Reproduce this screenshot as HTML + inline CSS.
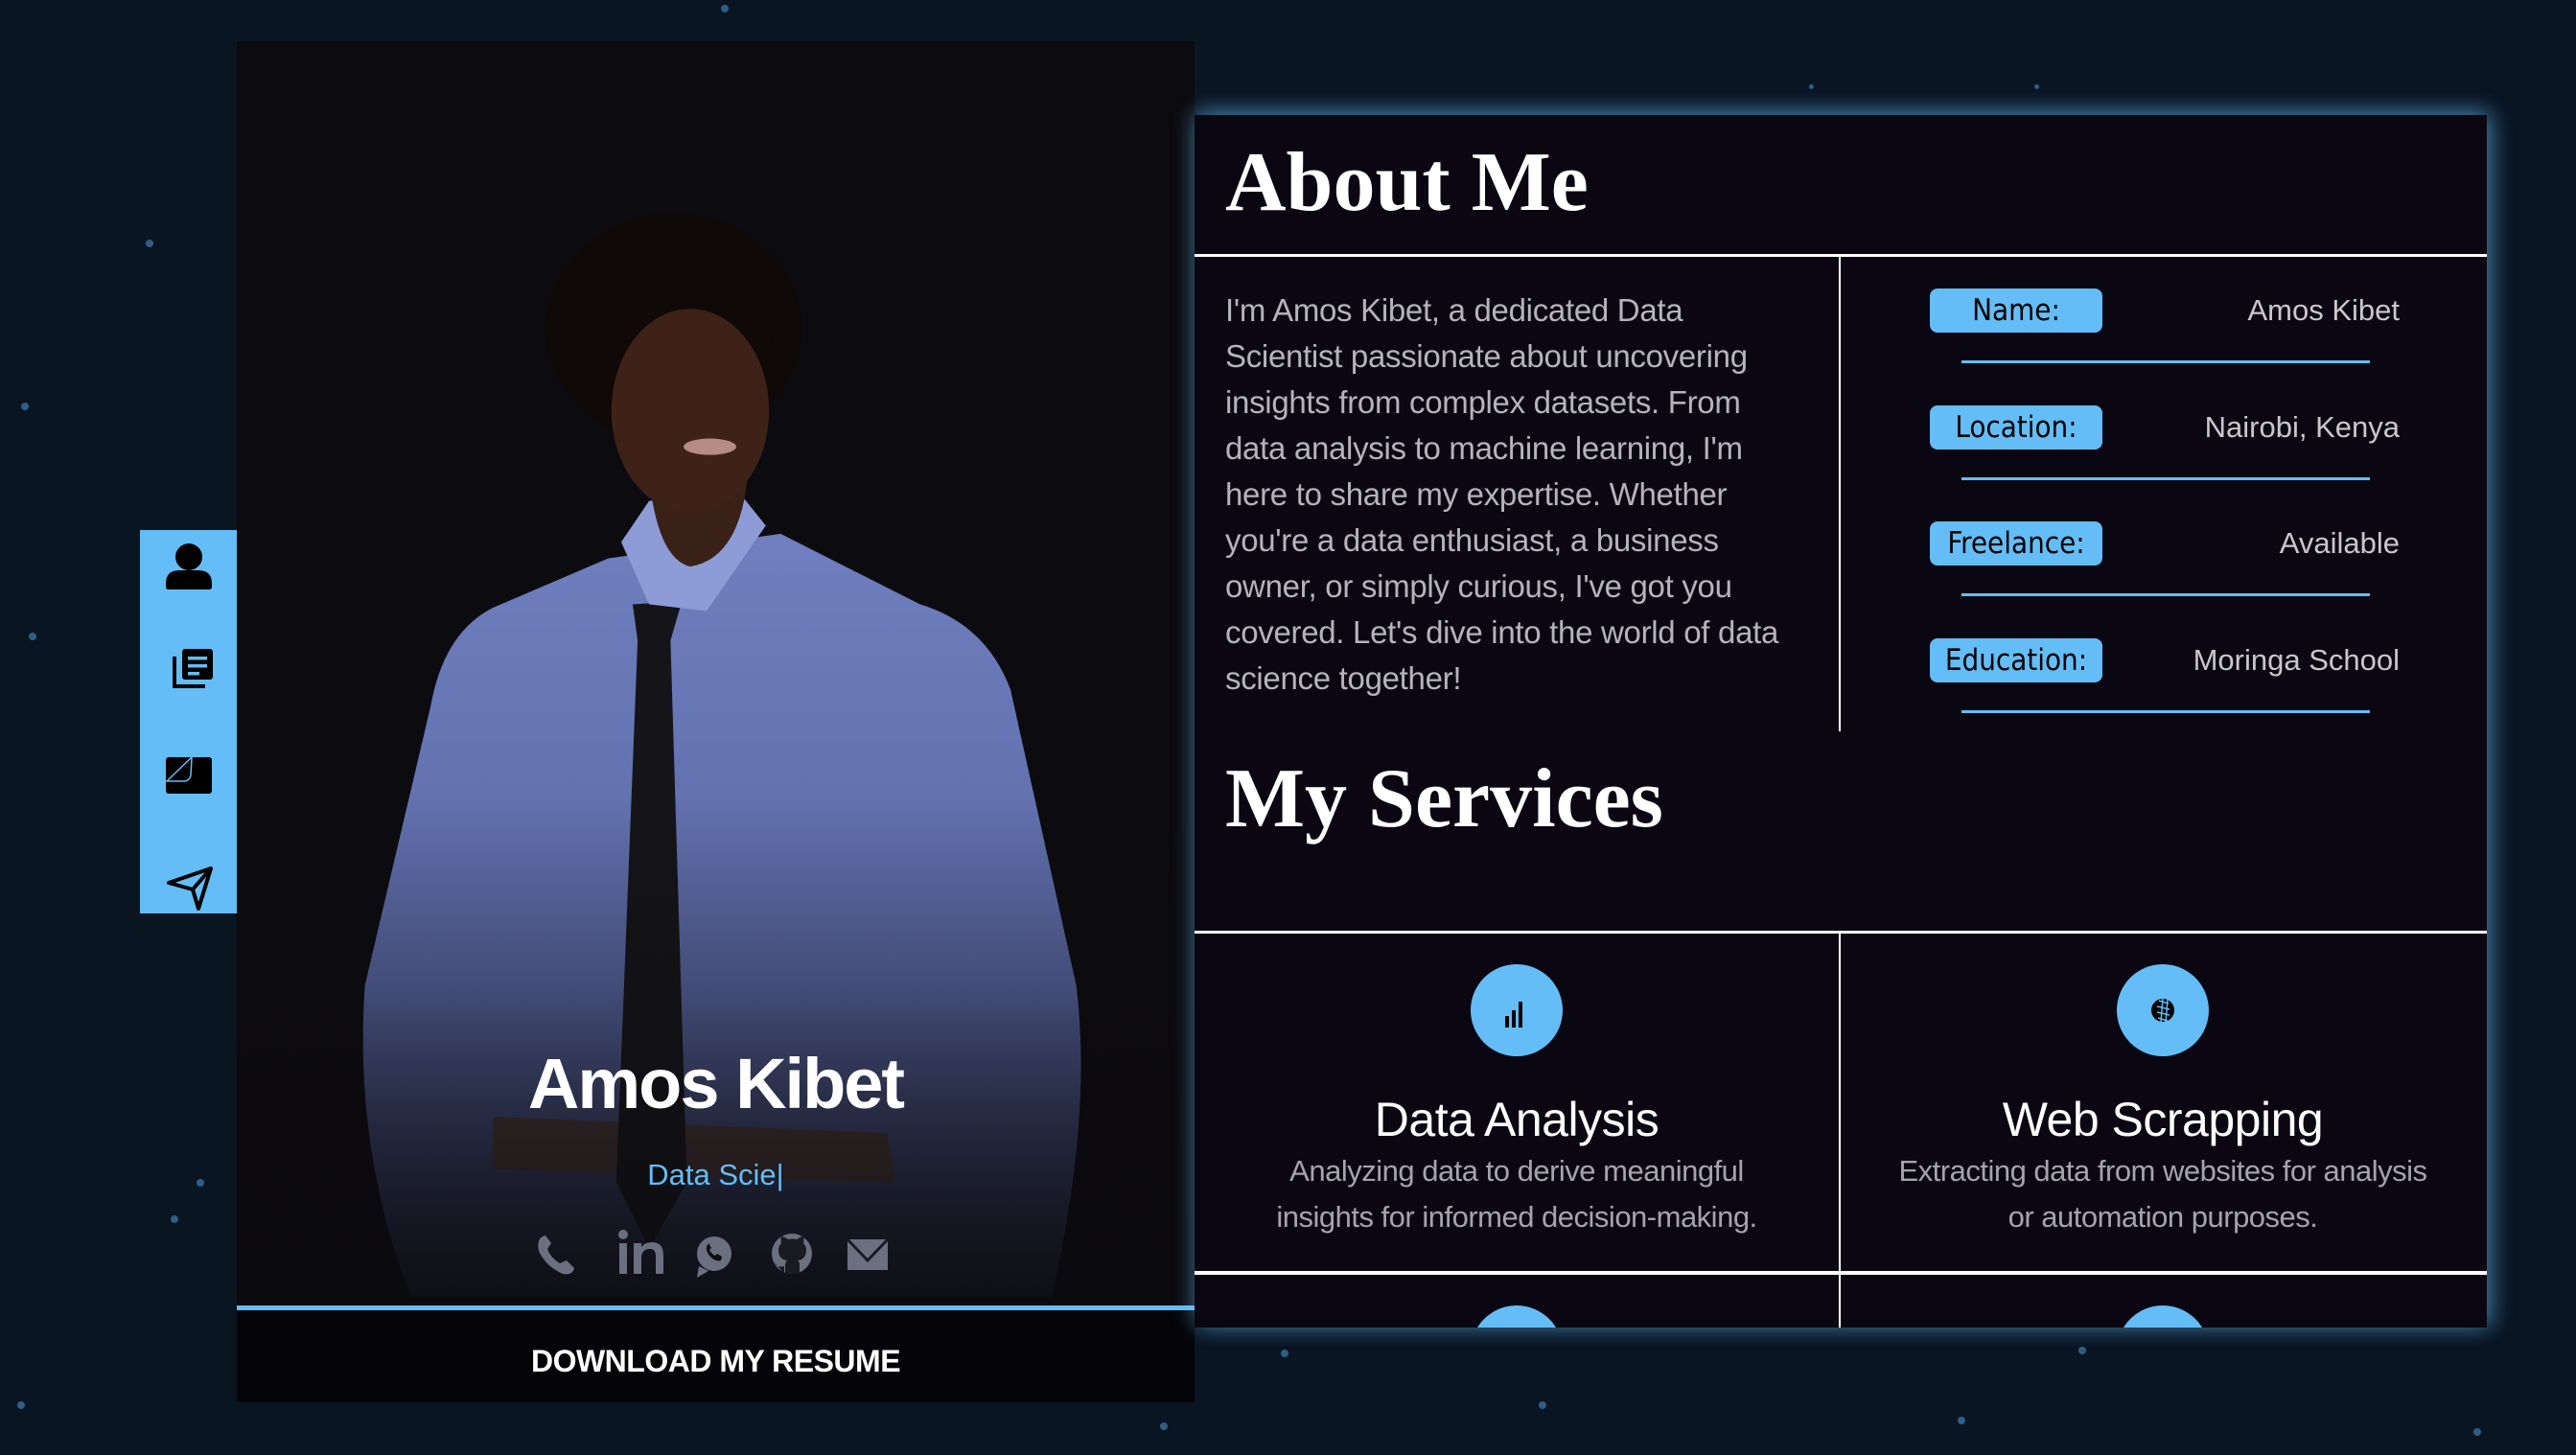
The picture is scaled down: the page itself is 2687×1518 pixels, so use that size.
<!DOCTYPE html>
<html><head><meta charset="utf-8"><style>
*{margin:0;padding:0;box-sizing:border-box}
html,body{width:2687px;height:1518px;overflow:hidden;background:#0a1522;font-family:"Liberation Sans",sans-serif}
.dot{position:absolute;width:8px;height:8px;border-radius:50%;background:#2e5e86}
#card{position:absolute;left:247px;top:43px;width:999px;height:1420px;background:#0b0a0d;overflow:hidden}
#photo{position:absolute;left:0;top:0;width:999px;height:1319px}
#name{position:absolute;left:0;width:999px;top:1045px;text-align:center;color:#fff;font-weight:bold;font-size:74px;letter-spacing:-2px}
#role{position:absolute;left:0;width:999px;top:1165px;text-align:center;color:#64bdf6;font-size:31px}
#icons{position:absolute;top:1240px;left:0;width:999px}
#bar{position:absolute;left:0;top:1319px;width:999px;height:5px;background:#64bdf6}
#dl{position:absolute;left:0;top:1324px;width:999px;height:96px;background:#050508;color:#fff;font-weight:bold;font-size:32px;text-align:center;line-height:106px;letter-spacing:-.5px}
#side{position:absolute;left:146px;top:553px;width:101px;height:400px;background:#64bdf6}
#panel{position:absolute;left:1246px;top:120px;width:1348px;height:1265px;background:#0b0712;box-shadow:0 -4px 22px rgba(100,189,246,.45),6px 0 22px rgba(100,189,246,.35);overflow:hidden}
.h1{position:absolute;left:32px;font-family:"Liberation Serif",serif;font-weight:bold;font-size:88px;color:#fff}
.line{position:absolute;background:#fff}
#para{position:absolute;left:32px;top:180px;width:605px;color:#b4b4bd;font-size:33px;line-height:48px;letter-spacing:-.3px}
.row{position:absolute;left:767px;width:490px}
.badge{position:absolute;left:0;top:0;width:180px;height:46px;border-radius:8px;background:#64bdf6;color:#000;font-size:31px;text-align:center;line-height:46px;font-family:"DejaVu Sans Condensed","DejaVu Sans",sans-serif}
.val{position:absolute;right:0;top:0;line-height:46px;color:#c8c8cc;font-size:31px}
.ul{position:absolute;left:33px;top:75px;width:426px;height:3px;background:#64bdf6}
.svc{position:absolute;width:672px;text-align:center}
.circ{width:96px;height:96px;border-radius:50%;background:#64bdf6;margin:0 auto;position:relative}
.svc h3{color:#fff;font-weight:normal;font-size:50px;margin-top:36px;line-height:60px;letter-spacing:-.5px}
.svc p{color:#a4a4ae;font-size:31px;line-height:48px;margin-top:0px;letter-spacing:-.5px}
</style></head><body>
<div class="dot" style="left:752px;top:5px"></div>
<div class="dot" style="left:152px;top:250px"></div>
<div class="dot" style="left:22px;top:420px"></div>
<div class="dot" style="left:30px;top:660px"></div>
<div class="dot" style="left:205px;top:1230px"></div>
<div class="dot" style="left:178px;top:1268px"></div>
<div class="dot" style="left:18px;top:1462px"></div>
<div class="dot" style="left:1336px;top:1408px"></div>
<div class="dot" style="left:1210px;top:1484px"></div>
<div class="dot" style="left:1605px;top:1462px"></div>
<div class="dot" style="left:2168px;top:1405px"></div>
<div class="dot" style="left:2042px;top:1478px"></div>
<div class="dot" style="left:2580px;top:1490px"></div>
<div class="dot" style="left:1887px;top:88px;width:5px;height:5px"></div>
<div class="dot" style="left:2122px;top:88px;width:5px;height:5px"></div>

<div id="card">
<svg id="photo" viewBox="144 25 583 770" preserveAspectRatio="none">
<defs><linearGradient id="sh" x1="0" y1="0" x2="0" y2="1"><stop offset="0" stop-color="#6f7fbf"/><stop offset=".6" stop-color="#5a68a4"/><stop offset="1" stop-color="#1c1f33"/></linearGradient>
<linearGradient id="fade" x1="0" y1="0" x2="0" y2="1"><stop offset=".6" stop-color="#0b0a0d" stop-opacity="0"/><stop offset="1" stop-color="#0b0a0d" stop-opacity=".8"/></linearGradient></defs>
<rect x="144" y="25" width="583" height="770" fill="#0c0b0f"/>
<path d="M370 340 L300 370 Q270 385 262 430 L222 600 Q215 700 250 790 L640 790 Q665 680 655 600 L615 420 Q600 380 560 368 L475 325 Z" fill="url(#sh)"/>
<path d="M300 680 L540 690 L545 720 L300 712 Z" fill="#4a3226" opacity=".8"/>
<path d="M385 368 L415 366 L408 390 L418 720 L395 760 L375 720 L388 390 Z" fill="#151519"/>
<path d="M378 330 L395 368 L430 372 L466 320 L450 300 L395 305 Z" fill="#8d9cd6"/>
<path d="M395 290 Q400 340 420 345 Q450 340 455 290 Z" fill="#3a2118"/>
<ellipse cx="410" cy="200" rx="78" ry="70" fill="#0f0907"/>
<ellipse cx="420" cy="250" rx="48" ry="62" fill="#3e2217"/>
<path d="M365 215 Q370 160 420 158 Q465 160 470 215 Q470 170 420 150 Q360 160 365 215 Z" fill="#0f0907"/>
<ellipse cx="432" cy="272" rx="16" ry="5" fill="#b58c88"/>
<rect x="144" y="25" width="583" height="770" fill="url(#fade)"/>
</svg>
<div id="name">Amos Kibet</div>
<div id="role">Data Scie|</div>
<svg id="icons" width="999" height="50" viewBox="0 0 999 50" fill="#6b7080">
<path d="M322 6 Q312 8 315 22 Q322 38 340 46 Q350 48 352 40 L344 32 L337 35 Q327 29 324 20 L328 14 Z"/>
<rect x="399" y="14" width="8" height="32"/><circle cx="403" cy="5" r="5"/>
<path d="M414 14 h8 v4 q4-5 11-5 q12 0 12 14 v19 h-8 v-18 q0-8-6-8 q-8 0-9 8 v18 h-8z"/>
<circle cx="498" cy="25" r="18"/><path d="M482 38 L480 50 L492 43 Z"/>
<path d="M491 16 q-3 4 2 11 q6 7 12 5 l1-4 -5-3 -2 2 q-4-2-6-6 l2-2 -3-5z" fill="#0f0e14"/>
<circle cx="579" cy="25" r="21"/><path d="M571 46 v-8 q-8 2-10-4 M587 46 v-9 q0-4-2-5 q9-1 9-11 q0-4-3-7 q1-4 0-7 q-3 0-7 3 q-5-1-9 0 q-4-3-7-3 q-1 3 0 7 q-3 3-3 7 q0 10 9 11 q-2 2-2 5 v9 z" fill="#1a1a22"/>
<rect x="637" y="10" width="42" height="32"/><path d="M637 10 L658 32 L679 10" stroke="#1a1a22" stroke-width="3" fill="none"/>
</svg>
<div id="bar"></div>
<div id="dl">DOWNLOAD MY RESUME</div>
</div>

<div id="side">
<svg width="101" height="400" viewBox="0 0 101 400">
<circle cx="51" cy="28" r="14"/><path d="M27 56 q0-14 14-14 h20 q14 0 14 14 v3 q0 3-3 3 h-42 q-3 0-3-3z"/>
<rect x="44" y="124" width="32" height="32" rx="3"/><path d="M36 132 v31 h32" stroke="#000" stroke-width="4" fill="none"/>
<rect x="50" y="132" width="20" height="3.5" fill="#64bdf6"/><rect x="50" y="140" width="20" height="3.5" fill="#64bdf6"/><rect x="50" y="148" width="12" height="3.5" fill="#64bdf6"/>
<rect x="27" y="237" width="48" height="38" rx="3"/><path d="M28 262 L54 237 L53 256 Q52 261 47 262 Z" fill="none" stroke="#64bdf6" stroke-width="1.5"/>
<path d="M30 368 L74 353 L61 395 L55 375 Z" fill="none" stroke="#000" stroke-width="4" stroke-linejoin="round"/><path d="M55 375 L74 353" stroke="#000" stroke-width="4"/>
</svg>
</div>

<div id="panel">
<div class="h1" style="top:20px">About Me</div>
<div class="line" style="left:0;top:145px;width:1348px;height:3px"></div>
<div class="line" style="left:672px;top:145px;width:2px;height:498px"></div>
<div id="para">I'm Amos Kibet, a dedicated Data Scientist passionate about uncovering insights from complex datasets. From data analysis to machine learning, I'm here to share my expertise. Whether you're a data enthusiast, a business owner, or simply curious, I've got you covered. Let's dive into the world of data science together!</div>
<div class="row" style="top:181px"><div class="badge">Name:</div><div class="val">Amos Kibet</div><div class="ul"></div></div>
<div class="row" style="top:303px"><div class="badge">Location:</div><div class="val">Nairobi, Kenya</div><div class="ul"></div></div>
<div class="row" style="top:424px"><div class="badge">Freelance:</div><div class="val">Available</div><div class="ul"></div></div>
<div class="row" style="top:546px"><div class="badge">Education:</div><div class="val">Moringa School</div><div class="ul"></div></div>
<div class="h1" style="top:663px">My Services</div>
<div class="line" style="left:0;top:851px;width:1348px;height:3px"></div>
<div class="line" style="left:672px;top:851px;width:2px;height:420px"></div>
<div class="line" style="left:0;top:1206px;width:1348px;height:4px"></div>
<div class="svc" style="left:0;top:886px"><div class="circ"><svg width="96" height="96" viewBox="0 0 96 96"><rect x="36" y="54" width="4" height="12"/><rect x="43" y="48" width="4" height="18"/><rect x="50" y="39" width="4" height="27"/></svg></div><h3>Data Analysis</h3><p>Analyzing data to derive meaningful<br>insights for informed decision-making.</p></div>
<div class="svc" style="left:674px;top:886px"><div class="circ"><svg width="96" height="96" viewBox="0 0 96 96"><circle cx="48" cy="48" r="12"/><path d="M44 38 l10 3 M42 44 l13 3 M42 50 l13 3 M43 56 l10 3 M48 36 l-2 24 M53 37 l-2 24" stroke="#64bdf6" stroke-width="1.5"/></svg></div><h3>Web Scrapping</h3><p>Extracting data from websites for analysis<br>or automation purposes.</p></div>
<div class="circ" style="position:absolute;left:288px;top:1242px"></div>
<div class="circ" style="position:absolute;left:962px;top:1242px"></div>
</div>
</body></html>
